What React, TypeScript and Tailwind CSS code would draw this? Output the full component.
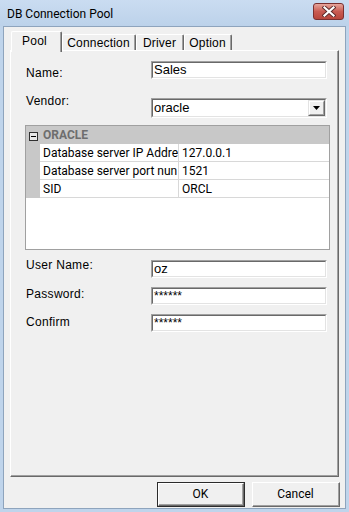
import React from "react";

const dotum = { fontFamily: '"Liberation Sans", Arial, sans-serif' };
const ui = { fontFamily: 'Roboto, "Liberation Sans", Arial, sans-serif' };

function Sunken({ w, h, children }: { w: number; h: number; children?: React.ReactNode }) {
  return (
    <div
      className="border border-t-[#a0a0a0] border-l-[#a0a0a0] border-r-white border-b-white"
      style={{ width: w, height: h }}
    >
      <div className="w-full h-full border border-t-[#696969] border-l-[#696969] border-r-[#e3e3e3] border-b-[#e3e3e3] bg-white flex items-center">
        {children}
      </div>
    </div>
  );
}

function Tab({ label, w, selected }: { label: string; w: number; selected?: boolean }) {
  if (selected) {
    return (
      <div
        className="relative z-10 h-[21px] -mb-[2px] bg-[#f0f0f0] border-l border-t border-l-white border-t-white border-r border-r-[#696969] rounded-tl-[2px] rounded-tr-[2px] flex"
        style={{ width: w }}
      >
        <div className="flex-1 border-r border-r-[#a0a0a0] flex justify-center pt-[2px]">
          <span className="text-[12px] leading-[14px] text-black pr-[3px] tracking-[0.2px]" style={dotum}>
            {label}
          </span>
        </div>
      </div>
    );
  }
  return (
    <div
      className="h-[16px] bg-[#f0f0f0] border-l border-t border-l-white border-t-white border-r border-r-[#696969] rounded-tl-[2px] rounded-tr-[2px] flex"
      style={{ width: w }}
    >
      <div className="flex-1 border-r border-r-[#a0a0a0] flex justify-center pt-[1px]">
        <span className="text-[12px] leading-[14px] text-black tracking-[0.2px]" style={dotum}>
          {label}
        </span>
      </div>
    </div>
  );
}

function Label({ text, top }: { text: string; top: number }) {
  return (
    <div className="w-[140px] shrink-0 pl-[15px]" style={{ marginTop: top }}>
      <span className="block text-[12px] leading-[14px] text-black tracking-[0.3px]" style={dotum}>
        {text}
      </span>
    </div>
  );
}

function PropRow({ name, value }: { name: string; value: string }) {
  return (
    <div className="flex h-[18px]">
      <div className="w-[14px] shrink-0 bg-[#c8c8c8]" />
      <div className="w-[139px] shrink-0 border-b border-r border-[#d8d8d8] bg-white pl-[3px] flex items-center">
        <span className="block w-full overflow-hidden whitespace-nowrap text-[12px] leading-[14px] text-black" style={ui}>
          {name}
        </span>
      </div>
      <div className="flex-1 border-b border-[#d8d8d8] bg-white pl-[3px] flex items-center">
        <span className="text-[12px] leading-[14px] text-black" style={ui}>
          {value}
        </span>
      </div>
    </div>
  );
}

function Button({ label, def }: { label: string; def?: boolean }) {
  const inner = (
    <div className="w-full h-full border border-t-white border-l-white border-r-[#696969] border-b-[#696969]">
      <div className="w-full h-full border-r border-b border-r-[#a0a0a0] border-b-[#a0a0a0] flex items-center justify-center">
        <span className="text-[12px] leading-[14px] text-black" style={ui}>
          {label}
        </span>
      </div>
    </div>
  );
  return (
    <div className={`w-[88px] h-[25px] bg-[#f0f0f0] ${def ? "border border-[#2b2b2b]" : ""}`}>{inner}</div>
  );
}

export default function App() {
  return (
    <div className="w-[349px] h-[512px] bg-[#bfd4eb] flex flex-col overflow-hidden">
      {/* Title bar */}
      <div className="h-[26px] shrink-0 flex items-center pl-[7px] pr-[5px] bg-gradient-to-b from-[#cadcf1] to-[#bcd2ea]">
        <span className="text-[12px] leading-[14px] text-black flex-1 pt-[1px]" style={ui}>
          DB Connection Pool
        </span>
        <div className="w-[31px] h-[17px] -mt-[4px] rounded-[3px] border border-[#7a3030] bg-gradient-to-b from-[#e6a59c] via-[#c95b52] to-[#b8463c] flex items-center justify-center">
          <svg width="14" height="11" viewBox="0 0 14 11">
            <path d="M2.5 1.5 L11.5 9.5 M11.5 1.5 L2.5 9.5" stroke="#5a2a2a" strokeWidth="4" strokeLinecap="square" />
            <path d="M2.5 1.5 L11.5 9.5 M11.5 1.5 L2.5 9.5" stroke="#ffffff" strokeWidth="2.2" strokeLinecap="square" />
          </svg>
        </div>
      </div>
      {/* Client */}
      <div className="mx-[3px] mb-[3px] flex-1 border border-[#8ea4bd] bg-[#f0f0f0] flex flex-col">
        {/* Tabs */}
        <div className="h-[19px] mt-[4px] pl-[7px] flex items-end shrink-0">
          <Tab label="Pool" w={51} selected />
          <Tab label="Connection" w={74} />
          <Tab label="Driver" w={48} />
          <Tab label="Option" w={48} />
        </div>
        {/* Panel */}
        <div className="ml-[6px] w-[329px] h-[427px] shrink-0 border-l border-t border-l-white border-t-white border-r border-b border-r-[#696969] border-b-[#696969]">
          <div className="w-full h-full border-r border-b border-r-[#a0a0a0] border-b-[#a0a0a0] flex flex-col">
            {/* Name */}
            <div className="flex items-start mt-[10px]">
              <Label text="Name:" top={5} />
              <Sunken w={176} h={18}>
                <span className="pl-[1px] text-[13px] leading-[14px] text-black" style={dotum}>
                  Sales
                </span>
              </Sunken>
            </div>
            {/* Vendor */}
            <div className="flex items-start mt-[18px]">
              <Label text="Vendor:" top={-4} />
              <Sunken w={176} h={20}>
                <span className="flex-1 pl-[1px] text-[13px] leading-[14px] text-black" style={dotum}>
                  oracle
                </span>
                <div className="w-[17px] h-[16px] border border-t-[#e3e3e3] border-l-[#e3e3e3] border-r-[#696969] border-b-[#696969] bg-[#f0f0f0]">
                  <div className="w-full h-full border-r border-b border-r-[#a0a0a0] border-b-[#a0a0a0] border-t border-l border-t-white border-l-white flex items-center justify-center">
                    <svg width="7" height="4" viewBox="0 0 7 4">
                      <path d="M0 0 H7 L3.5 4 Z" fill="#000" />
                    </svg>
                  </div>
                </div>
              </Sunken>
            </div>
            {/* Property grid */}
            <div className="ml-[14px] mt-[7px] w-[305px] h-[125px] border border-[#a0a0a0] bg-white flex flex-col">
              <div className="h-[18px] bg-[#c8c8c8] flex items-center">
                <div className="w-[14px] flex items-center justify-center pl-[1px] pt-[2px]">
                  <div className="w-[9px] h-[9px] border border-[#303030] bg-[#e8e8e8] flex items-center justify-center">
                    <div className="w-[5px] h-[1px] bg-black" />
                  </div>
                </div>
                <span className="pl-[3px] text-[12px] leading-[14px] font-bold text-[#6e6e6e]" style={ui}>
                  ORACLE
                </span>
              </div>
              <PropRow name="Database server IP Addre" value="127.0.0.1" />
              <PropRow name="Database server port nun" value="1521" />
              <PropRow name="SID" value="ORCL" />
            </div>
            {/* User Name */}
            <div className="flex items-start mt-[10px]">
              <Label text="User Name:" top={-2} />
              <Sunken w={176} h={18}>
                <span className="pl-[1px] text-[13px] leading-[14px] text-black" style={dotum}>
                  oz
                </span>
              </Sunken>
            </div>
            <div className="flex items-start mt-[9px]">
              <Label text="Password:" top={0} />
              <Sunken w={176} h={18}>
                <span className="pl-[1px] text-[12px] leading-[14px] text-black" style={dotum}>
                  ******
                </span>
              </Sunken>
            </div>
            <div className="flex items-start mt-[9px]">
              <Label text="Confirm" top={1} />
              <Sunken w={176} h={18}>
                <span className="pl-[1px] text-[12px] leading-[14px] text-black" style={dotum}>
                  ******
                </span>
              </Sunken>
            </div>
          </div>
        </div>
        {/* Buttons */}
        <div className="mt-[5px] flex justify-end gap-[7px] pr-[5px]">
          <Button label="OK" def />
          <Button label="Cancel" />
        </div>
      </div>
    </div>
  );
}
